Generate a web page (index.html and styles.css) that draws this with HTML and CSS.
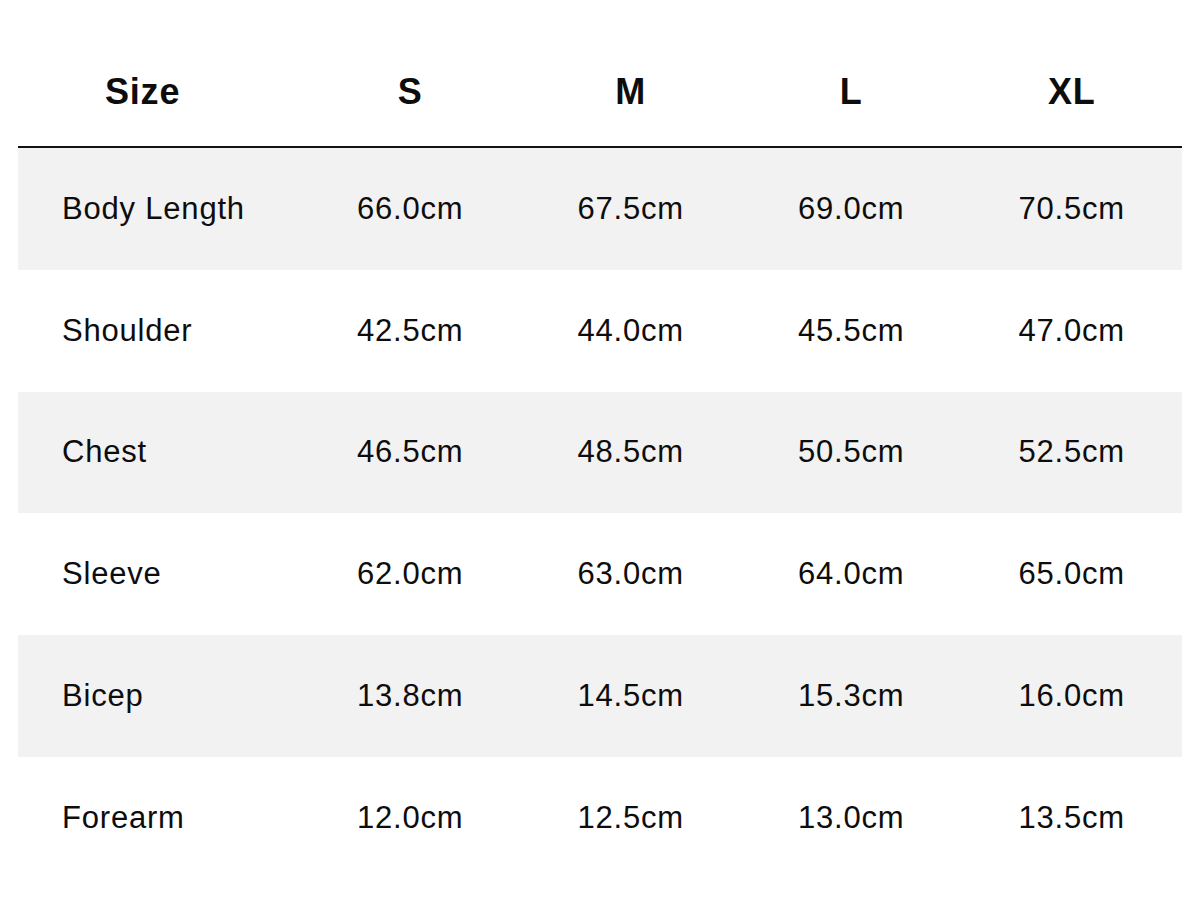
FILE: index.html
```html
<!DOCTYPE html>
<html lang="en">
<head>
<meta charset="utf-8">
<title>Size Chart</title>
<link rel="stylesheet" href="styles.css">
</head>
<body>
<div class="chart">
  <div class="row head">
    <div class="cell label">Size</div>
    <div class="cell">S</div>
    <div class="cell">M</div>
    <div class="cell">L</div>
    <div class="cell">XL</div>
  </div>
  <div class="row shade">
    <div class="cell label">Body Length</div>
    <div class="cell">66.0cm</div>
    <div class="cell">67.5cm</div>
    <div class="cell">69.0cm</div>
    <div class="cell">70.5cm</div>
  </div>
  <div class="row">
    <div class="cell label">Shoulder</div>
    <div class="cell">42.5cm</div>
    <div class="cell">44.0cm</div>
    <div class="cell">45.5cm</div>
    <div class="cell">47.0cm</div>
  </div>
  <div class="row shade">
    <div class="cell label">Chest</div>
    <div class="cell">46.5cm</div>
    <div class="cell">48.5cm</div>
    <div class="cell">50.5cm</div>
    <div class="cell">52.5cm</div>
  </div>
  <div class="row">
    <div class="cell label">Sleeve</div>
    <div class="cell">62.0cm</div>
    <div class="cell">63.0cm</div>
    <div class="cell">64.0cm</div>
    <div class="cell">65.0cm</div>
  </div>
  <div class="row shade">
    <div class="cell label">Bicep</div>
    <div class="cell">13.8cm</div>
    <div class="cell">14.5cm</div>
    <div class="cell">15.3cm</div>
    <div class="cell">16.0cm</div>
  </div>
  <div class="row">
    <div class="cell label">Forearm</div>
    <div class="cell">12.0cm</div>
    <div class="cell">12.5cm</div>
    <div class="cell">13.0cm</div>
    <div class="cell">13.5cm</div>
  </div>
</div>
</body>
</html>
```
FILE: styles.css
```css
html, body {
  margin: 0;
  padding: 0;
  background: #ffffff;
}

body {
  font-family: "Liberation Sans", Arial, sans-serif;
  color: #0d0d0d;
}

.chart {
  margin: 0 18px;
  padding-top: 38px;
}

.row {
  display: grid;
  grid-template-columns: 282px repeat(4, 1fr);
  align-items: center;
  height: 121.8px;
  font-size: 31px;
  letter-spacing: 0.8px;
}

.row.shade {
  background: #f2f2f2;
}

.cell {
  text-align: center;
}

.cell.label {
  text-align: left;
  padding-left: 44px;
}

.row.head {
  height: 108px;
  border-bottom: 2px solid #111111;
  font-size: 36px;
  font-weight: 700;
  letter-spacing: 0.8px;
}

.row.head .cell.label {
  padding-left: 87px;
}
```
